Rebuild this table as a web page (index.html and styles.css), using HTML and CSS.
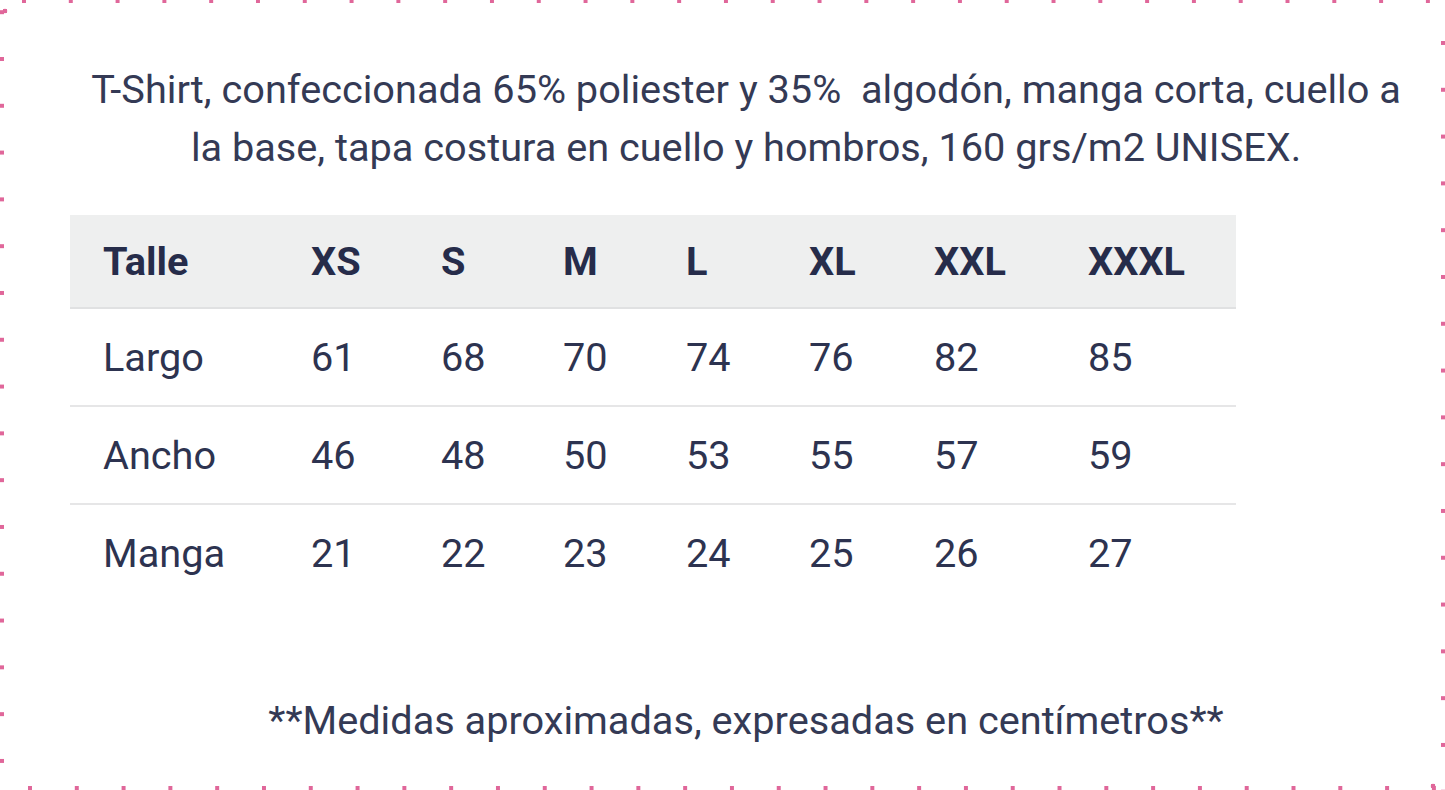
FILE: index.html
```html
<!DOCTYPE html>
<html lang="es">
<head>
<meta charset="utf-8">
<title>Tabla de talles</title>
<link rel="stylesheet" href="styles.css">
</head>
<body>
<main class="content">
  <p class="desc">T-Shirt, confeccionada 65% poliester y 35%&nbsp; algodón, manga corta, cuello a<br>la base, tapa costura en cuello y hombros, 160 grs/m2 UNISEX.</p>
  <table class="sizes">
    <colgroup>
      <col class="c0"><col class="c1"><col class="c2"><col class="c3"><col class="c4"><col class="c5"><col class="c6"><col class="c7">
    </colgroup>
    <thead>
      <tr><th>Talle</th><th>XS</th><th>S</th><th>M</th><th>L</th><th>XL</th><th>XXL</th><th>XXXL</th></tr>
    </thead>
    <tbody>
      <tr><td>Largo</td><td>61</td><td>68</td><td>70</td><td>74</td><td>76</td><td>82</td><td>85</td></tr>
      <tr><td>Ancho</td><td>46</td><td>48</td><td>50</td><td>53</td><td>55</td><td>57</td><td>59</td></tr>
      <tr class="last"><td>Manga</td><td>21</td><td>22</td><td>23</td><td>24</td><td>25</td><td>26</td><td>27</td></tr>
    </tbody>
  </table>
  <p class="note">**Medidas aproximadas, expresadas en centímetros**</p>
</main>
</body>
</html>
```

FILE: styles.css
```css
html, body {
  margin: 0;
  padding: 0;
}

body {
  width: 1445px;
  height: 790px;
  overflow: hidden;
  background-color: #ffffff;
  background-image:
    radial-gradient(circle, #e0679a 2.2px, transparent 2.6px),
    radial-gradient(circle, #e0679a 2.2px, transparent 2.6px),
    linear-gradient(to right, #e0679a 4px, transparent 4px),
    linear-gradient(to right, #e0679a 4px, transparent 4px),
    linear-gradient(to bottom, #e0679a 4px, transparent 4px),
    linear-gradient(to bottom, #e0679a 4px, transparent 4px);
  background-size: 6px 6px, 6px 6px, 46.8px 3px, 46.8px 4px, 4px 46.8px, 4px 46.8px;
  background-repeat: no-repeat, no-repeat, repeat-x, repeat-x, repeat-y, repeat-y;
  background-position: 2px 8px, 1430px 783px, 22px 0, 28px 786px, 0 57px, 1441px 41px;
  font-family: Roboto, "Noto Sans", "Liberation Sans", sans-serif;
  color: #2d3350;
}

.content {
  box-sizing: border-box;
  width: 1422px;
  padding: 61px 0 0 70px;
}

.desc {
  margin: 0;
  font-size: 39.7px;
  line-height: 58px;
  text-align: center;
  color: #343a55;
}

.sizes {
  margin-top: 38px;
  width: 1166px;
  border-collapse: collapse;
  table-layout: fixed;
  font-size: 39.7px;
}

.c0 { width: 208px; }
.c1 { width: 130px; }
.c2 { width: 122px; }
.c3 { width: 123px; }
.c4 { width: 123px; }
.c5 { width: 125px; }
.c6 { width: 154px; }
.c7 { width: 181px; }

.sizes th,
.sizes td {
  text-align: left;
  padding: 0 0 0 33px;
  white-space: nowrap;
}

.sizes th {
  height: 92px;
  background: #eeefef;
  font-weight: 700;
  color: #262c4a;
  border-bottom: 2px solid #e0e1e2;
}

.sizes td {
  height: 96px;
  font-weight: 400;
  border-bottom: 2px solid #e6e6e7;
}

.sizes .last td {
  border-bottom: none;
}

.note {
  margin: 91px 0 0;
  font-size: 39.7px;
  line-height: 58px;
  text-align: center;
  color: #343a55;
}
```
